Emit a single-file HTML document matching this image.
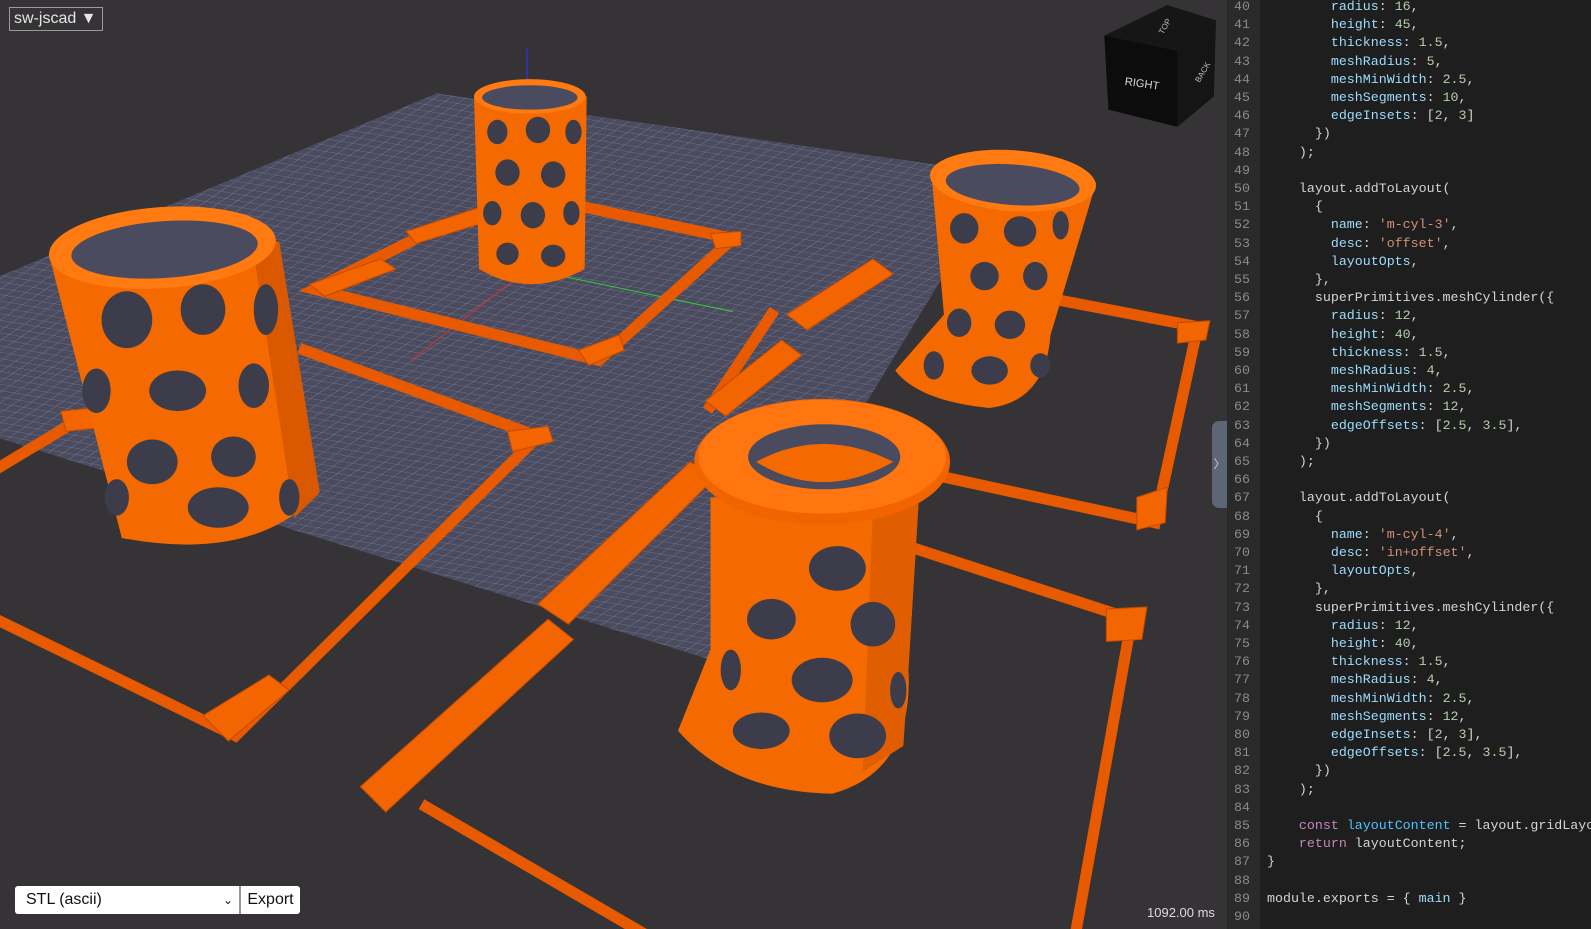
<!DOCTYPE html>
<html><head><meta charset="utf-8"><style>
html,body{margin:0;padding:0;width:1591px;height:929px;overflow:hidden;background:#353336;font-family:"Liberation Sans",sans-serif}
#view{position:absolute;left:0;top:0;width:1227px;height:929px;background:#353336;overflow:hidden}
#code{position:absolute;left:1227px;top:0;width:364px;height:929px;background:#1e1e1e;overflow:hidden}
#gut{position:absolute;left:0;top:0;width:33px;height:929px;background:#2a2a2b}
.ln{position:absolute;left:0;width:23px;text-align:right;color:#8a8a8a;font:13.3px/18.2px "Liberation Mono",monospace}
.cl{position:absolute;left:40px;white-space:pre;color:#d4d4d4;font:13.3px/18.2px "Liberation Mono",monospace}
.p{color:#9cdcfe}.n{color:#b5cea8}.s{color:#ce9178}.k{color:#c586c0}.v{color:#4fc1ff}
#title{position:absolute;left:9px;top:7px;height:22px;white-space:nowrap;padding:0 5px 0 4px;border:1px solid #9a9a9a;color:#e6e6e6;font-size:16px;line-height:21px;background:#353336}
#exp{position:absolute;left:15px;top:886px;height:28px;display:flex}
#sel{width:224px;height:28px;background:#fff;border-radius:3px 0 0 3px;font-size:16px;line-height:28px;padding-left:11px;box-sizing:border-box;color:#111;position:relative}
#btn{width:59px;height:28px;background:#fff;border-left:2px solid #999;border-radius:0 3px 3px 0;font-size:16px;line-height:28px;text-align:center;color:#111}
#ms{position:absolute;left:1147px;top:905px;color:#ddd;font-size:13px}
#handle{position:absolute;left:1212px;top:421px;width:15px;height:87px;background:#5c6675;border-radius:7px 0 0 7px;color:#ccc;font-size:12px;line-height:87px;text-align:center}
svg{transform-origin:0 0;transform:scale(1.015)}
</style></head><body>
<div id="view">
<svg width="1210" height="929" viewBox="0 0 1210 929">
<defs>
<pattern id="g" width="12" height="12" patternUnits="userSpaceOnUse" patternTransform="matrix(1,0.17,-0.62,0.42,0,0)">
<rect width="12" height="12" fill="#4a4b5f"/>
<path d="M0 0H12M0 0V12" stroke="#8a8ca6" stroke-width="0.8"/>
</pattern>
</defs>
<polygon points="430,92 990,172 700,650 0,432 0,272" fill="url(#g)"/>
<line x1="520" y1="265" x2="722" y2="307" stroke="#3c3" stroke-width="1"/>
<line x1="520" y1="265" x2="405" y2="355" stroke="#c33" stroke-width="1"/>
<line x1="520" y1="265" x2="519" y2="48" stroke="#33c" stroke-width="1.5"/>
<g stroke="#e85a00" stroke-width="11" fill="none" stroke-linecap="square">
<polyline points="430,225 310,285 590,355 722,235"/>
<polyline points="300,345 530,430 232,725 0,612"/>
<polyline points="0,460 75,415"/>
<polyline points="900,540 1115,610 1058,929"/>
<polyline points="420,795 650,929"/>
<polyline points="1040,295 1180,322 1138,515 930,470"/>
<polyline points="580,205 722,235"/>
<polyline points="760,310 700,400"/>
</g>
<g fill="#f36500" stroke="#c24a00" stroke-width="1">
<polygon points="530,595 680,455 705,470 560,615"/>
<polygon points="355,775 540,610 565,630 380,800"/>
<polygon points="695,395 770,335 790,350 715,410"/>
<polygon points="775,310 860,255 880,270 795,325"/>
<polygon points="305,280 375,255 390,265 320,292"/>
<polygon points="400,228 470,205 475,220 410,240"/>
<polygon points="500,425 540,420 545,435 505,445"/>
<polygon points="200,705 265,665 285,680 225,730"/>
<polygon points="570,345 610,330 615,345 580,360"/>
<polygon points="700,230 730,228 730,242 705,245"/>
<polygon points="1120,490 1150,480 1148,515 1120,522"/>
<polygon points="1160,318 1192,316 1188,335 1160,338"/>
<polygon points="1090,600 1130,598 1125,630 1090,632"/>
<polygon points="60,405 110,400 115,420 65,425"/>
</g>
<g>
<path d="M467,95 L578,95 L576,265 Q522,295 472,265 Z" fill="#f56a00"/>
<ellipse cx="522" cy="95" rx="55" ry="17" fill="#ff7a10"/>
<ellipse cx="522" cy="96" rx="47" ry="12" fill="#4a4b5f"/>
<g fill="#3c3c4a">
<ellipse cx="490" cy="130" rx="10" ry="12"/><ellipse cx="530" cy="128" rx="12" ry="13"/><ellipse cx="565" cy="130" rx="8" ry="12"/>
<ellipse cx="500" cy="170" rx="12" ry="13"/><ellipse cx="545" cy="172" rx="12" ry="13"/>
<ellipse cx="485" cy="210" rx="9" ry="12"/><ellipse cx="525" cy="212" rx="12" ry="13"/><ellipse cx="563" cy="210" rx="8" ry="12"/>
<ellipse cx="500" cy="250" rx="11" ry="11"/><ellipse cx="545" cy="252" rx="12" ry="11"/>
</g>
</g>
<g>
<path d="M48,250 L275,238 L315,485 Q250,555 120,530 Z" fill="#f56a00"/>
<path d="M250,250 L275,238 L315,485 L290,510 Z" fill="#d95800"/>
<ellipse cx="160" cy="244" rx="112" ry="40" fill="#ff7a10" transform="rotate(-4 160 244)"/>
<ellipse cx="162" cy="246" rx="92" ry="28" fill="#4a4b5f" transform="rotate(-4 160 244)"/>
<g fill="#3c3c4a">
<ellipse cx="125" cy="315" rx="25" ry="28"/><ellipse cx="200" cy="305" rx="22" ry="25"/><ellipse cx="262" cy="305" rx="12" ry="25"/>
<ellipse cx="95" cy="385" rx="14" ry="22"/><ellipse cx="175" cy="385" rx="28" ry="20"/><ellipse cx="250" cy="380" rx="15" ry="22"/>
<ellipse cx="150" cy="455" rx="25" ry="22"/><ellipse cx="230" cy="450" rx="22" ry="20"/>
<ellipse cx="115" cy="490" rx="12" ry="18"/><ellipse cx="215" cy="500" rx="30" ry="20"/><ellipse cx="285" cy="490" rx="10" ry="18"/>
</g>
</g>
<g>
<path d="M918,175 L1080,180 L1035,330 Q1030,395 975,402 Q905,395 882,365 L930,310 Z" fill="#f56a00"/>
<ellipse cx="998" cy="178" rx="82" ry="30" fill="#ff7a10" transform="rotate(4 998 178)"/>
<ellipse cx="998" cy="182" rx="66" ry="20" fill="#4a4b5f" transform="rotate(4 998 178)"/>
<g fill="#3c3c4a">
<ellipse cx="950" cy="225" rx="14" ry="15"/><ellipse cx="1005" cy="228" rx="16" ry="15"/><ellipse cx="1045" cy="222" rx="8" ry="14"/>
<ellipse cx="970" cy="272" rx="14" ry="14"/><ellipse cx="1020" cy="272" rx="12" ry="14"/>
<ellipse cx="945" cy="318" rx="12" ry="14"/><ellipse cx="995" cy="320" rx="15" ry="14"/>
<ellipse cx="920" cy="360" rx="10" ry="14"/><ellipse cx="975" cy="365" rx="18" ry="14"/><ellipse cx="1025" cy="360" rx="10" ry="12"/>
</g>
</g>
<g>
<path d="M700,490 L905,495 L895,660 Q900,760 820,782 Q720,780 668,720 L700,640 Z" fill="#f56a00"/>
<path d="M860,500 L905,495 L895,660 L890,735 L850,760 Z" fill="#e05d00"/>
<ellipse cx="810" cy="455" rx="126" ry="62" fill="#f26400"/>
<ellipse cx="810" cy="450" rx="122" ry="56" fill="#ff7510"/>
<ellipse cx="812" cy="450" rx="75" ry="32" fill="#4a4b5f"/>
<path d="M745,455 Q810,420 880,455 Q810,495 745,455" fill="#f56a00"/>
<g fill="#3c3c4a">
<ellipse cx="825" cy="560" rx="28" ry="22"/><ellipse cx="760" cy="610" rx="24" ry="20"/><ellipse cx="860" cy="615" rx="22" ry="22"/>
<ellipse cx="810" cy="670" rx="30" ry="22"/><ellipse cx="750" cy="720" rx="28" ry="18"/><ellipse cx="845" cy="725" rx="28" ry="22"/>
<ellipse cx="720" cy="660" rx="10" ry="20"/><ellipse cx="885" cy="680" rx="8" ry="18"/>
</g>
</g>
<g>
<polygon points="1088,35 1150,5 1198,20 1160,50" fill="#161616"/>
<polygon points="1088,35 1160,50 1160,125 1092,108" fill="#0c0c0c"/>
<polygon points="1160,50 1198,20 1196,95 1160,125" fill="#151515"/>
<text x="1108" y="86" fill="#d8d8d8" font-size="11" font-family="Liberation Sans" transform="rotate(8 1125 83)">RIGHT</text>
<text x="1140" y="32" fill="#bbb" font-size="8" transform="rotate(-60 1145 28)">TOP</text>
<text x="1175" y="80" fill="#bbb" font-size="8" transform="rotate(-60 1180 75)">BACK</text>
</g>
</svg>
<div id="title">sw-jscad ▼</div>
<div id="exp"><div id="sel">STL (ascii)<span style="position:absolute;right:6px;top:0;font-size:12px">⌄</span></div><div id="btn">Export</div></div>
<div id="ms">1092.00 ms</div>
<div id="handle">〉</div>
</div>
<div id="code"><div id="gut"></div>
<div class="ln" style="top:-2px">40</div><div class="cl" style="top:-2px">        <span class="p">radius</span>: <span class="n">16</span>,</div>
<div class="ln" style="top:16.2px">41</div><div class="cl" style="top:16.2px">        <span class="p">height</span>: <span class="n">45</span>,</div>
<div class="ln" style="top:34.4px">42</div><div class="cl" style="top:34.4px">        <span class="p">thickness</span>: <span class="n">1.5</span>,</div>
<div class="ln" style="top:52.6px">43</div><div class="cl" style="top:52.6px">        <span class="p">meshRadius</span>: <span class="n">5</span>,</div>
<div class="ln" style="top:70.8px">44</div><div class="cl" style="top:70.8px">        <span class="p">meshMinWidth</span>: <span class="n">2.5</span>,</div>
<div class="ln" style="top:89px">45</div><div class="cl" style="top:89px">        <span class="p">meshSegments</span>: <span class="n">10</span>,</div>
<div class="ln" style="top:107.2px">46</div><div class="cl" style="top:107.2px">        <span class="p">edgeInsets</span>: [<span class="n">2</span>, <span class="n">3</span>]</div>
<div class="ln" style="top:125.4px">47</div><div class="cl" style="top:125.4px">      })</div>
<div class="ln" style="top:143.6px">48</div><div class="cl" style="top:143.6px">    );</div>
<div class="ln" style="top:161.8px">49</div>
<div class="ln" style="top:180px">50</div><div class="cl" style="top:180px">    layout.addToLayout(</div>
<div class="ln" style="top:198.2px">51</div><div class="cl" style="top:198.2px">      {</div>
<div class="ln" style="top:216.4px">52</div><div class="cl" style="top:216.4px">        <span class="p">name</span>: <span class="s">'m-cyl-3'</span>,</div>
<div class="ln" style="top:234.6px">53</div><div class="cl" style="top:234.6px">        <span class="p">desc</span>: <span class="s">'offset'</span>,</div>
<div class="ln" style="top:252.8px">54</div><div class="cl" style="top:252.8px">        <span class="p">layoutOpts</span>,</div>
<div class="ln" style="top:271px">55</div><div class="cl" style="top:271px">      },</div>
<div class="ln" style="top:289.2px">56</div><div class="cl" style="top:289.2px">      superPrimitives.meshCylinder({</div>
<div class="ln" style="top:307.4px">57</div><div class="cl" style="top:307.4px">        <span class="p">radius</span>: <span class="n">12</span>,</div>
<div class="ln" style="top:325.6px">58</div><div class="cl" style="top:325.6px">        <span class="p">height</span>: <span class="n">40</span>,</div>
<div class="ln" style="top:343.8px">59</div><div class="cl" style="top:343.8px">        <span class="p">thickness</span>: <span class="n">1.5</span>,</div>
<div class="ln" style="top:362px">60</div><div class="cl" style="top:362px">        <span class="p">meshRadius</span>: <span class="n">4</span>,</div>
<div class="ln" style="top:380.2px">61</div><div class="cl" style="top:380.2px">        <span class="p">meshMinWidth</span>: <span class="n">2.5</span>,</div>
<div class="ln" style="top:398.4px">62</div><div class="cl" style="top:398.4px">        <span class="p">meshSegments</span>: <span class="n">12</span>,</div>
<div class="ln" style="top:416.6px">63</div><div class="cl" style="top:416.6px">        <span class="p">edgeOffsets</span>: [<span class="n">2.5</span>, <span class="n">3.5</span>],</div>
<div class="ln" style="top:434.8px">64</div><div class="cl" style="top:434.8px">      })</div>
<div class="ln" style="top:453px">65</div><div class="cl" style="top:453px">    );</div>
<div class="ln" style="top:471.2px">66</div>
<div class="ln" style="top:489.4px">67</div><div class="cl" style="top:489.4px">    layout.addToLayout(</div>
<div class="ln" style="top:507.6px">68</div><div class="cl" style="top:507.6px">      {</div>
<div class="ln" style="top:525.8px">69</div><div class="cl" style="top:525.8px">        <span class="p">name</span>: <span class="s">'m-cyl-4'</span>,</div>
<div class="ln" style="top:544px">70</div><div class="cl" style="top:544px">        <span class="p">desc</span>: <span class="s">'in+offset'</span>,</div>
<div class="ln" style="top:562.2px">71</div><div class="cl" style="top:562.2px">        <span class="p">layoutOpts</span>,</div>
<div class="ln" style="top:580.4px">72</div><div class="cl" style="top:580.4px">      },</div>
<div class="ln" style="top:598.6px">73</div><div class="cl" style="top:598.6px">      superPrimitives.meshCylinder({</div>
<div class="ln" style="top:616.8px">74</div><div class="cl" style="top:616.8px">        <span class="p">radius</span>: <span class="n">12</span>,</div>
<div class="ln" style="top:635px">75</div><div class="cl" style="top:635px">        <span class="p">height</span>: <span class="n">40</span>,</div>
<div class="ln" style="top:653.2px">76</div><div class="cl" style="top:653.2px">        <span class="p">thickness</span>: <span class="n">1.5</span>,</div>
<div class="ln" style="top:671.4px">77</div><div class="cl" style="top:671.4px">        <span class="p">meshRadius</span>: <span class="n">4</span>,</div>
<div class="ln" style="top:689.6px">78</div><div class="cl" style="top:689.6px">        <span class="p">meshMinWidth</span>: <span class="n">2.5</span>,</div>
<div class="ln" style="top:707.8px">79</div><div class="cl" style="top:707.8px">        <span class="p">meshSegments</span>: <span class="n">12</span>,</div>
<div class="ln" style="top:726px">80</div><div class="cl" style="top:726px">        <span class="p">edgeInsets</span>: [<span class="n">2</span>, <span class="n">3</span>],</div>
<div class="ln" style="top:744.2px">81</div><div class="cl" style="top:744.2px">        <span class="p">edgeOffsets</span>: [<span class="n">2.5</span>, <span class="n">3.5</span>],</div>
<div class="ln" style="top:762.4px">82</div><div class="cl" style="top:762.4px">      })</div>
<div class="ln" style="top:780.6px">83</div><div class="cl" style="top:780.6px">    );</div>
<div class="ln" style="top:798.8px">84</div>
<div class="ln" style="top:817px">85</div><div class="cl" style="top:817px">    <span class="k">const</span> <span class="v">layoutContent</span> = layout.gridLayout</div>
<div class="ln" style="top:835.2px">86</div><div class="cl" style="top:835.2px">    <span class="k">return</span> layoutContent;</div>
<div class="ln" style="top:853.4px">87</div><div class="cl" style="top:853.4px">}</div>
<div class="ln" style="top:871.6px">88</div>
<div class="ln" style="top:889.8px">89</div><div class="cl" style="top:889.8px">module.exports = { <span class="p">main</span> }</div>
<div class="ln" style="top:908px">90</div>
</div>
</body></html>
